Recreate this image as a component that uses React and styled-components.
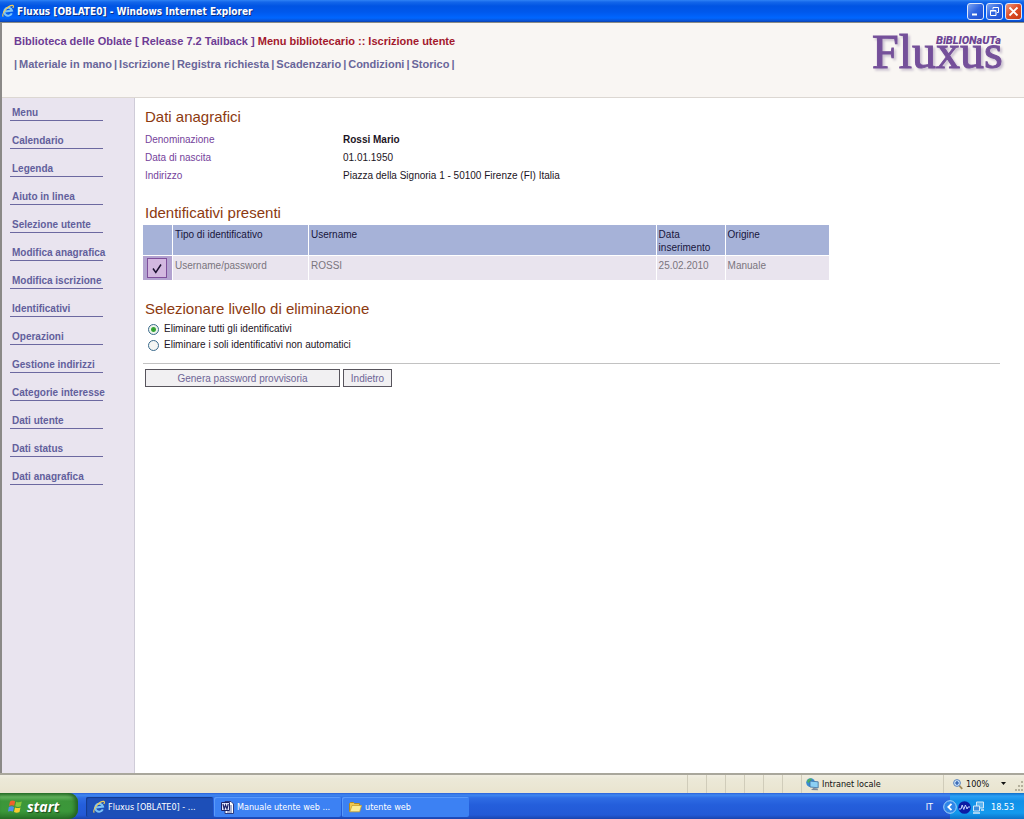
import React, { useState } from 'react';
import styled, { createGlobalStyle } from 'styled-components';

const GlobalStyle = createGlobalStyle`
  * {
    box-sizing: border-box;
  }

  body {
    margin: 0;
    background: #fff;
    font-family: "Liberation Sans", Arial, sans-serif;
    font-size: 10px;
    color: #1c1424;
  }
`;

const Page = styled.div`
  display: flex;
  flex-direction: column;
  min-height: 100vh;
`;

const TitleBar = styled.div`
  display: flex;
  align-items: center;
  gap: 3px;
  height: 22px;
  padding: 0 2px;
  color: #fff;
  font: bold 10px "DejaVu Sans Condensed", "DejaVu Sans", sans-serif;
  font-stretch: condensed;
  background: linear-gradient(#2f83f5 0, #1467ea 2px, #0054e3 6px, #0058ec 12px, #0066ff 18px, #0a50d0 21px, #0a3fa8);
`;

const TitleText = styled.span`
  flex: 1;
  text-shadow: 1px 1px 0 #0a2f86;
`;

const WindowButtons = styled.div`
  display: flex;
  gap: 2px;
`;

const WindowButton = styled.button`
  display: flex;
  align-items: center;
  justify-content: center;
  width: 17px;
  height: 17px;
  padding: 0;
  border: 1px solid #dfe8fb;
  border-radius: 3px;
  background: ${(props) =>
    props.$close
      ? 'linear-gradient(135deg, #f09a80, #dd4b24 50%, #c63a14)'
      : 'linear-gradient(135deg, #7da5f2, #2d63e0 50%, #1f4fd0)'};
`;

const Window = styled.div`
  flex: 1;
  display: flex;
  flex-direction: column;
  border-top: 1px solid #8d8c86;
  border-left: 2px solid #8b8987;
`;

const Header = styled.header`
  display: flex;
  justify-content: space-between;
  height: 75px;
  padding: 11px 20px 0 12px;
  background: #f9f6f3;
  border-bottom: 1px solid #dcd7d2;
`;

const HeaderText = styled.div`
  display: flex;
  flex-direction: column;
  gap: 9px;
  font-size: 11px;
  font-weight: bold;
  line-height: 14px;
`;

const Trail = styled.div`
  color: #6d3c94;
`;

const Current = styled.span`
  color: #a3182c;
`;

const TopNav = styled.nav`
  display: flex;
  gap: 2px;
  color: #69669a;
`;

const NavLink = styled.a`
  color: #69669a;
  text-decoration: none;
`;

const Logo = styled.svg`
  width: 134px;
  height: 50px;
  overflow: visible;
`;

const Body = styled.div`
  flex: 1;
  display: flex;
`;

const Sidebar = styled.nav`
  display: flex;
  flex-direction: column;
  gap: 13px;
  width: 133px;
  padding: 8px 31px 20px 8px;
  background: #e9e4ef;
  border-right: 1px solid #cfccd8;
`;

const SideLink = styled.a`
  padding-left: 2px;
  border-bottom: 1px solid #6c68a0;
  color: #625f9c;
  font-weight: bold;
  line-height: 14px;
  text-decoration: none;
  white-space: nowrap;
`;

const Main = styled.main`
  flex: 1;
  padding: 10px 24px 20px 8px;
`;

const Title = styled.h2`
  margin: 0;
  padding-left: 2px;
  color: #8c3a10;
  font-size: 15px;
  font-weight: normal;
  line-height: 18px;
`;

const Details = styled.dl`
  display: grid;
  grid-template-columns: 198px 1fr;
  margin: 5px 0 19px;
  padding-left: 2px;
  line-height: 18px;
`;

const Term = styled.dt`
  color: #75429b;
`;

const Value = styled.dd`
  margin: 0;
  font-weight: ${(props) => (props.$strong ? 'bold' : 'normal')};
`;

const Table = styled.table`
  width: 80%;
  margin: 3px 0 20px;
  border-spacing: 0;
  table-layout: fixed;
  line-height: 13px;
`;

const Column = styled.col`
  width: ${(props) => props.$width};
`;

const HeadCell = styled.th`
  height: 31px;
  padding: 3px 2px 1px;
  border-right: 1px solid #fff;
  border-bottom: 1px solid #fff;
  background: #a6b2d8;
  color: #17153c;
  font-weight: normal;
  text-align: left;
  vertical-align: top;

  &:last-child {
    border-right: 0;
  }
`;

const Cell = styled.td`
  height: 24px;
  padding: ${(props) => (props.$check ? '2px 4px' : '3px 2px')};
  border-right: 1px solid #fff;
  background: ${(props) => (props.$check ? '#b3a3d0' : '#e9e4ee')};
  color: #7a757d;
  vertical-align: top;

  &:last-child {
    border-right: 0;
  }
`;

const CheckLabel = styled.label`
  position: relative;
  display: block;
  width: 20px;
  height: 20px;
`;

const Check = styled.input`
  appearance: none;
  display: block;
  width: 20px;
  height: 20px;
  margin: 0;
  border: 1px solid #7f4f9c;
  background: #d3b8e0;
`;

const CheckMark = styled.svg`
  position: absolute;
  inset: 0;
  pointer-events: none;
`;

const Options = styled.fieldset`
  margin: 3px 0 10px;
  padding: 0 0 0 5px;
  border: 0;
`;

const Option = styled.label`
  display: flex;
  align-items: center;
  gap: 5px;
  line-height: 16px;
`;

const Radio = styled.input`
  appearance: none;
  width: 11px;
  height: 11px;
  margin: 0;
  border: 1px solid #3a6a8c;
  border-radius: 50%;
  background: #f4f6f4;

  &:checked {
    background: radial-gradient(circle, #2c9a2c 0, #3aa83a 2px, #eef4ec 3px);
  }
`;

const Actions = styled.div`
  display: flex;
  gap: 3px;
  padding: 5px 0 0 2px;
  border-top: 1px solid #c2c2c2;
`;

const Button = styled.button`
  width: ${(props) => (props.$wide ? '195px' : '49px')};
  height: 18px;
  padding: 0;
  border: 1px solid #57545c;
  background: #f1f0f2;
  color: #6e6596;
  font: inherit;
`;

const StatusBar = styled.footer`
  display: flex;
  align-items: stretch;
  justify-content: flex-end;
  height: 20px;
  border-top: 2px solid #a9a79c;
  background: linear-gradient(#f1eee2, #ece9d8 4px, #e9e4cf);
  color: #111;
  font: 9px "DejaVu Sans Condensed", "DejaVu Sans", sans-serif;
  font-stretch: condensed;
`;

const StatusCell = styled.div`
  display: flex;
  align-items: center;
  gap: 3px;
  width: ${(props) => props.$width || '19px'};
  padding-left: ${(props) => props.$pad || '0'};
  border-left: 1px solid #d0ccba;
`;

const Spacer = styled.span`
  flex: 1;
`;

const Taskbar = styled.div`
  display: flex;
  align-items: stretch;
  height: 26px;
  background: linear-gradient(#2a5fd8 0, #3f87f0 2px, #2e6ce4 5px, #245edb 12px, #2259d6 22px, #1a44ae);
  color: #fff;
  font: 9px "DejaVu Sans Condensed", "DejaVu Sans", sans-serif;
  font-stretch: condensed;
`;

const StartButton = styled.button`
  display: flex;
  align-items: center;
  gap: 4px;
  width: 78px;
  margin-right: 8px;
  padding: 0 0 0 8px;
  border: 0;
  border-radius: 0 9px 9px 0;
  background: linear-gradient(#2f7a2e 0, #62b05c 4px, #3c963a 8px, #3b983a 18px, #2a752a);
  box-shadow: inset -3px 0 4px #226022;
  color: #fff;
  font: italic bold 14px "Open Sans", sans-serif;
  text-shadow: 1px 1px 1px #1c4a1c;
`;

const TaskButton = styled.button`
  display: flex;
  align-items: center;
  gap: 3px;
  width: 127px;
  margin: 4px 1px 2px 0;
  padding: 0 0 0 7px;
  border: 0;
  border-radius: 2px;
  background: ${(props) => (props.$active ? '#1d4fb8' : '#3c81f3')};
  box-shadow: ${(props) => (props.$active ? 'inset 1px 1px 1px #153a8c' : 'inset 1px 1px 0 #5a9afa')};
  color: #fff;
  font: inherit;
`;

const Language = styled.span`
  align-self: center;
  margin-left: auto;
  margin-right: 11px;
  padding-top: 2px;
`;

const Tray = styled.div`
  display: flex;
  align-items: center;
  gap: 1px;
  width: 74px;
  margin-left: 6px;
  padding-top: 2px;
  background: linear-gradient(#0f6cc8 0, #2ba0f4 3px, #1290e8 8px, #139aee 20px, #0d72c8);
`;

const Chevron = styled.svg`
  margin-left: -7px;
`;

const Clock = styled.span`
  margin-left: 5px;
`;

const IeIcon = () => (
  <svg width="12" height="14" viewBox="0 0 12 14" fill="none">
    <path d="M9.8 9.4A4 4 0 1 1 10 6.6L3.2 7.6" stroke="#7cc4f8" strokeWidth="2" />
    <path d="M1.2 12.6C-1 9 7 .6 11 1.4c.8.4.4 1.8-.3 2.6" stroke="#f0cc58" strokeWidth="1.1" />
  </svg>
);

const WindowsIcon = () => (
  <svg width="15" height="15" viewBox="0 0 15 15">
    <path d="M2 2.4Q4.5.8 7.2 2.2L6.2 6.8Q3.8 5.6 1 6.9z" fill="#f0602c" />
    <path d="M8.2 2.7Q10.7 4 13.8 2.6L12.8 7.2Q10 8.6 7.2 7.2z" fill="#86c83c" />
    <path d="M.8 8Q3.4 6.7 6 8L5 12.5Q2.4 11.3 0 12.6z" fill="#4c8cf0" />
    <path d="M7 8.4Q9.6 9.7 12.5 8.4L11.5 13Q8.6 14.3 6 12.9z" fill="#f8cc30" />
  </svg>
);

const WordIcon = () => (
  <svg width="13" height="13" viewBox="0 0 13 13">
    <path d="M4 .5h6l2.5 2.5v9.5H4z" fill="#fff" stroke="#2a3a80" />
    <path d="M9 5h2M9 7h2M9 9h2M6 11h5" stroke="#5060a0" />
    <path d="M.5 1.5h8v8h-8z" fill="#e6eafc" stroke="#1c2468" />
    <path d="M2 3l1.2 5L4.5 4 6 8l1.2-5" fill="none" stroke="#1c2468" strokeWidth="1.2" />
  </svg>
);

const FolderIcon = () => (
  <svg width="13" height="12" viewBox="0 0 13 12">
    <path d="M.5 10.5v-8l1-1h3l1 1h5v2" fill="#f0c850" stroke="#b08820" />
    <path d="M.8 10.8L3 4.5h9.6l-2 6.3z" fill="#fbec94" stroke="#c8a030" strokeWidth=".8" />
  </svg>
);

const IntranetIcon = () => (
  <svg width="13" height="13" viewBox="0 0 13 13">
    <circle cx="4.6" cy="4.6" r="4.4" fill="#3a8cd4" />
    <path d="M1 3Q3-.2 6 .8L4.6 3.6 2 5z" fill="#4cb060" />
    <path d="M4 3l8.2.8v6L4 9z" fill="#8cd0f4" stroke="#3c6c9c" strokeWidth=".8" />
    <path d="M5 12l2.4-2 4 .4.8 1.8z" fill="#7c8898" />
  </svg>
);

const ZoomIcon = () => (
  <svg width="10" height="11" viewBox="0 0 10 11" fill="none">
    <path d="M6.2 6.5l3 3.4" stroke="#a08858" strokeWidth="1.8" />
    <circle cx="4" cy="4" r="3.4" fill="#cce4fa" stroke="#5c84bc" />
    <path d="M4 2v4M2 4h4" stroke="#1c50a8" strokeWidth="1.2" />
  </svg>
);

const LogoName = styled.text`
  font: 48px "Liberation Serif", serif;
  fill: #75509a;
  stroke: #75509a;
  stroke-width: 1px;
  filter: drop-shadow(2px 2px 1px #c9c0cf);
`;

const LogoTag = styled.text`
  font: italic 900 11px Roboto, sans-serif;
  fill: #6c4494;
`;

const FluxusLogo = () => (
  <Logo viewBox="0 0 134 50" role="img" aria-label="Fluxus Biblionauta">
    <LogoName x="2" y="34">Fluxus</LogoName>
    <LogoTag x="66" y="10">BiBLIONaUTa</LogoTag>
  </Logo>
);

const topLinks = ['Materiale in mano', 'Iscrizione', 'Registra richiesta', 'Scadenzario', 'Condizioni', 'Storico'];

const sideLinks = [
  'Menu',
  'Calendario',
  'Legenda',
  'Aiuto in linea',
  'Selezione utente',
  'Modifica anagrafica',
  'Modifica iscrizione',
  'Identificativi',
  'Operazioni',
  'Gestione indirizzi',
  'Categorie interesse',
  'Dati utente',
  'Dati status',
  'Dati anagrafica',
];

const levels = [
  { id: 'all', label: 'Eliminare tutti gli identificativi' },
  { id: 'manual', label: 'Eliminare i soli identificativi non automatici' },
];

const App = () => {
  const [selected, setSelected] = useState(true);
  const [level, setLevel] = useState('all');

  return (
    <Page>
      <GlobalStyle />
      <TitleBar>
        <IeIcon />
        <TitleText>Fluxus [OBLATE0] - Windows Internet Explorer</TitleText>
        <WindowButtons>
          <WindowButton aria-label="Minimize">
            <svg width="11" height="11"><path d="M2 8.5h5" stroke="#fff" strokeWidth="2" /></svg>
          </WindowButton>
          <WindowButton aria-label="Restore">
            <svg width="11" height="11" fill="none" stroke="#fff">
              <path d="M4 3.5V1.5h5.5v5H8M1.5 4.5h5.5v5H1.5zM1.5 5h5.5" />
            </svg>
          </WindowButton>
          <WindowButton $close aria-label="Close">
            <svg width="11" height="11"><path d="M1.5 1.5l8 8M9.5 1.5l-8 8" stroke="#fff" strokeWidth="1.8" /></svg>
          </WindowButton>
        </WindowButtons>
      </TitleBar>

      <Window>
        <Header>
          <HeaderText>
            <Trail>
              Biblioteca delle Oblate [ Release 7.2 Tailback ]{' '}
              <Current>Menu bibliotecario :: Iscrizione utente</Current>
            </Trail>
            <TopNav>
              <span>|</span>
              {topLinks.map((link) => (
                <React.Fragment key={link}>
                  <NavLink href="#">{link}</NavLink>
                  <span>|</span>
                </React.Fragment>
              ))}
            </TopNav>
          </HeaderText>
          <FluxusLogo />
        </Header>

        <Body>
          <Sidebar>
            {sideLinks.map((link) => (
              <SideLink key={link} href="#">{link}</SideLink>
            ))}
          </Sidebar>

          <Main>
            <Title>Dati anagrafici</Title>
            <Details>
              <Term>Denominazione</Term>
              <Value $strong>Rossi Mario</Value>
              <Term>Data di nascita</Term>
              <Value>01.01.1950</Value>
              <Term>Indirizzo</Term>
              <Value>Piazza della Signoria 1 - 50100 Firenze (FI) Italia</Value>
            </Details>

            <Title>Identificativi presenti</Title>
            <Table>
              <colgroup>
                <Column $width="30px" />
                <Column $width="136px" />
                <Column />
                <Column $width="69px" />
                <Column $width="103px" />
              </colgroup>
              <thead>
                <tr>
                  <HeadCell />
                  <HeadCell>Tipo di identificativo</HeadCell>
                  <HeadCell>Username</HeadCell>
                  <HeadCell>Data inserimento</HeadCell>
                  <HeadCell>Origine</HeadCell>
                </tr>
              </thead>
              <tbody>
                <tr>
                  <Cell $check>
                    <CheckLabel>
                      <Check
                        type="checkbox"
                        aria-label="Seleziona ROSSI"
                        checked={selected}
                        onChange={(e) => setSelected(e.target.checked)}
                      />
                      {selected && (
                        <CheckMark width="20" height="20">
                          <path d="M6 10.5l2.8 4L14 6.5" fill="none" stroke="#1c1030" strokeWidth="1.5" />
                        </CheckMark>
                      )}
                    </CheckLabel>
                  </Cell>
                  <Cell>Username/password</Cell>
                  <Cell>ROSSI</Cell>
                  <Cell>25.02.2010</Cell>
                  <Cell>Manuale</Cell>
                </tr>
              </tbody>
            </Table>

            <Title>Selezionare livello di eliminazione</Title>
            <Options>
              {levels.map((item) => (
                <Option key={item.id}>
                  <Radio
                    type="radio"
                    name="level"
                    checked={level === item.id}
                    onChange={() => setLevel(item.id)}
                  />
                  {item.label}
                </Option>
              ))}
            </Options>
            <Actions>
              <Button $wide>Genera password provvisoria</Button>
              <Button>Indietro</Button>
            </Actions>
          </Main>
        </Body>
      </Window>

      <StatusBar>
        <StatusCell />
        <StatusCell />
        <StatusCell />
        <StatusCell />
        <StatusCell />
        <StatusCell />
        <StatusCell $width="142px" $pad="4px">
          <IntranetIcon />
          Intranet locale
        </StatusCell>
        <StatusCell $width="81px" $pad="9px">
          <ZoomIcon />
          100%
          <Spacer />
          <svg width="6" height="4"><path d="M0 0h5L2.5 3z" fill="#111" /></svg>
          <svg width="14" height="16" fill="#b4b09c">
            <path d="M11 5h2v2h-2zM8 9h2v2H8zM11 9h2v2h-2zM5 13h2v2H5zM8 13h2v2H8zM11 13h2v2h-2z" />
          </svg>
        </StatusCell>
      </StatusBar>

      <Taskbar>
        <StartButton>
          <WindowsIcon />
          start
        </StartButton>
        <TaskButton $active>
          <IeIcon />
          Fluxus [OBLATE0] - ...
        </TaskButton>
        <TaskButton>
          <WordIcon />
          Manuale utente web ...
        </TaskButton>
        <TaskButton>
          <FolderIcon />
          utente web
        </TaskButton>
        <Language>IT</Language>
        <Tray>
          <Chevron width="14" height="14" viewBox="0 0 14 14">
            <circle cx="7" cy="7" r="6.3" fill="#2f86e8" stroke="#a4d4fa" />
            <path d="M8.5 3.8L5.3 7l3.2 3.2" fill="none" stroke="#fff" strokeWidth="1.8" />
          </Chevron>
          <svg width="13" height="13" viewBox="0 0 13 13">
            <circle cx="6.5" cy="6.5" r="6.3" fill="#0c1ca4" />
            <path d="M1 8h2l1.2-4 1.6 4.5L7.4 4 9 8l1-2h2" fill="none" stroke="#c8d4fc" />
          </svg>
          <svg width="13" height="13" viewBox="0 0 13 13">
            <path d="M4.5 1h7v6h-7z" fill="#5cb4f0" stroke="#d4e8f8" />
            <path d="M1.5 5h6v5h-6z" fill="#3c8cdc" stroke="#d4e8f8" />
            <path d="M1 12h7M9 9h3" stroke="#d4e8f8" strokeWidth="1.4" />
          </svg>
          <Clock>18.53</Clock>
        </Tray>
      </Taskbar>
    </Page>
  );
};

export default App;
